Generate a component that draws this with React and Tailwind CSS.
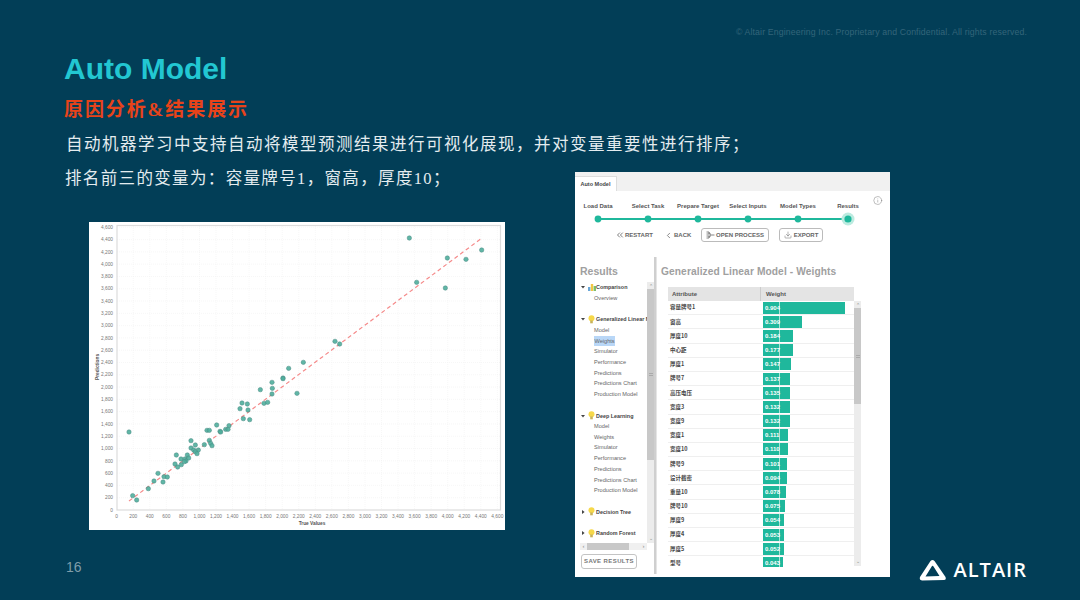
import React from 'react'
import { ChevronsLeft, ChevronLeft, Download, Info } from 'lucide-react'

const sans = { fontFamily: '"Liberation Sans", Arial, sans-serif' }
const body = { fontFamily: '"Liberation Serif", "Noto Sans CJK SC", serif' }

// scatter points measured off the chart, upper part and lower part
const upper = [
  [973, 60], [1087, 120], [1143, 124], [1190, 96], [995, 193], [1081, 210],
  [750, 370], [764, 378], [655, 433], [611, 451], [594, 480],
]
const lower = [
  [561, 22], [594, 11], [526, 44], [562, 40], [636, 55], [561, 57], [471, 84], [487, 87],
  [465, 101], [489, 105], [537, 85], [548, 82], [475, 131], [494, 134], [395, 150], [432, 152],
  [366, 166], [373, 166], [405, 169], [407, 171], [422, 163], [429, 163], [132, 171], [318, 197],
  [373, 196], [377, 205], [381, 212], [358, 209], [331, 210], [318, 219], [326, 225], [340, 225],
  [331, 230], [336, 236], [274, 240], [307, 240], [288, 252], [300, 252], [311, 249], [303, 258],
  [298, 260], [270, 267], [278, 276], [289, 269], [219, 295], [237, 305], [247, 306], [207, 318],
  [234, 321], [190, 341], [143, 362], [155, 375],
]
const points = [
  ...upper.map(([x, y]) => [x / 3 - 4, y / 3 - 4]),
  ...lower.map(([x, y]) => [x / 3 - 4, y / 3 + 153]),
]

const xTicks = Array.from({ length: 24 }, (_, i) => i * 200)
const yTicks = Array.from({ length: 24 }, (_, i) => i * 200)
const px = (v) => 27.7 + v * 0.08275
const py = (v) => 288 - v * 0.06146
const fmt = (v) => v.toLocaleString('en-US')

function Chart() {
  return (
    <div className="w-[416px] h-[308px] ml-[25px] mt-[31px] bg-white">
      <svg viewBox="0 0 416 308" className="w-[416px] h-[308px] block" style={sans}>
        {xTicks.map((t) => (
          <g key={t}>
            {t > 0 && <line x1={px(t)} x2={px(t)} y1="4" y2="288" stroke="#f1f1f1" strokeWidth="0.6" strokeDasharray="1 1" />}
            <text x={px(t)} y="295.5" fontSize="4.8" fill="#777" textAnchor="middle">{fmt(t)}</text>
          </g>
        ))}
        {yTicks.map((t) => (
          <g key={t}>
            {t > 0 && <line x1="28" x2="411" y1={py(t)} y2={py(t)} stroke="#f1f1f1" strokeWidth="0.6" strokeDasharray="1 1" />}
            <text x="24" y={py(t) + 1.7} fontSize="4.8" fill="#777" textAnchor="end">{fmt(t)}</text>
          </g>
        ))}
        <rect x="28" y="3.5" width="383.5" height="284.5" fill="none" stroke="#dcdcdc" strokeWidth="1.2" />
        <line x1="40" y1="279" x2="392" y2="16.7" stroke="#f58a8a" strokeWidth="1.2" strokeDasharray="4 3" />
        {points.map(([x, y], i) => (
          <circle key={i} cx={x} cy={y} r="2.2" fill="#4fae9c" stroke="#4d8a84" strokeWidth="0.5" fillOpacity="0.9" />
        ))}
        <text x="223" y="302.5" fontSize="4.8" fontWeight="700" fill="#555" textAnchor="middle">True Values</text>
        <text transform="translate(9.5 145) rotate(-90)" fontSize="4.8" fontWeight="700" fill="#555" textAnchor="middle">Predictions</text>
      </svg>
    </div>
  )
}

function Stepper() {
  const steps = ['Load Data', 'Select Task', 'Prepare Target', 'Select Inputs', 'Model Types', 'Results']
  return (
    <div className="ml-[-2px]">
      <div className="grid grid-cols-6 w-[300px] mt-[11px]">
        {steps.map((s) => (
          <div key={s} className="text-center text-[6px] leading-[8px] font-bold text-[#555] whitespace-nowrap">{s}</div>
        ))}
      </div>
      <svg width="300" height="16" className="block mt-[1px]">
        <line x1="25" x2="275" y1="8" y2="8" stroke="#1fb89c" strokeWidth="2" />
        {[25, 75, 125, 175, 225].map((x) => (
          <circle key={x} cx={x} cy="8" r="3.4" fill="#1fb89c" />
        ))}
        <circle cx="275" cy="8" r="6.5" fill="#bcebe0" />
        <circle cx="275" cy="8" r="3.6" fill="#1fb89c" />
      </svg>
    </div>
  )
}

function ProcessIcon() {
  return (
    <svg width="9" height="8" viewBox="0 0 9 8" fill="none" stroke="#666" strokeWidth="0.8">
      <path d="M0.5 1H3V3H0.5M0.5 5H3V7H0.5M3 2H4V6H3M4 4H8.5" />
    </svg>
  )
}

function Toolbar() {
  return (
    <div className="flex items-center mt-[1px] h-[14px] text-[6px] font-bold text-[#666]">
      <div className="flex items-center ml-[40px] w-[49px]">
        <ChevronsLeft size={10} strokeWidth={2} />
        RESTART
      </div>
      <div className="flex items-center gap-[1px] w-[37px]">
        <ChevronLeft size={9} strokeWidth={2} />
        BACK
      </div>
      <div className="flex items-center justify-center gap-[1px] w-[68px] h-[14px] border border-[#bbb] rounded-[3px]">
        <ProcessIcon />
        OPEN PROCESS
      </div>
      <div className="flex items-center justify-center gap-[2px] w-[44px] h-[14px] ml-[10px] border border-[#bbb] rounded-[3px]">
        <Download size={8} strokeWidth={1.5} />
        EXPORT
      </div>
    </div>
  )
}

function Bulb() {
  return (
    <svg width="7" height="9" viewBox="0 0 7 9" className="shrink-0">
      <circle cx="3.5" cy="3.2" r="3" fill="#f6d84a" />
      <rect x="2.2" y="5.5" width="2.6" height="2.8" fill="#c9b35a" />
    </svg>
  )
}

function BarsIcon() {
  return (
    <svg width="8" height="8" viewBox="0 0 8 8" className="shrink-0">
      <rect x="0" y="4" width="2.4" height="4" fill="#6aa7d8" />
      <rect x="2.8" y="1" width="2.4" height="7" fill="#f2c744" />
      <rect x="5.6" y="3" width="2.4" height="5" fill="#7cbf6b" />
    </svg>
  )
}

function Arrow({ open }) {
  return (
    <svg width="4" height="4" viewBox="0 0 4 4" className="shrink-0">
      <path d={open ? 'M0 1H4L2 3.6Z' : 'M1 0V4L3.6 2Z'} fill="#444" />
    </svg>
  )
}

const children = ['Model', 'Weights', 'Simulator', 'Performance', 'Predictions', 'Predictions Chart', 'Production Model']

function TreeHead({ label, open, bars }) {
  return (
    <div className="flex items-center h-[10.7px] text-[5.4px] font-bold text-[#444] whitespace-nowrap pl-[1px]">
      <Arrow open={open} />
      <span className="w-[3px] shrink-0" />
      {bars ? <BarsIcon /> : <Bulb />}
      <span className={bars ? '' : 'ml-[1px]'}>{label}</span>
    </div>
  )
}

function TreeLeaf({ label, selected }) {
  return (
    <div className="h-[10.7px] flex items-center pl-[14px] text-[5.6px] text-[#666] whitespace-nowrap">
      <span className={selected ? 'bg-[#b9d7f7] px-[0.5px] leading-[10px]' : ''}>{label}</span>
    </div>
  )
}

function Scrollbar({ height, thumb }) {
  return (
    <div className="w-[7px] bg-[#ececec] flex flex-col justify-between shrink-0" style={{ height }}>
      <div>
        <div className="h-[7px] text-[5px] leading-[8px] text-center text-[#888]">⌃</div>
        <div className="bg-[#c8c8c8] flex items-center justify-center" style={{ height: thumb }}>
          <div className="w-[4px] h-[3px] border-y border-[#aaa]" />
        </div>
      </div>
      <div className="h-[7px] text-[5px] leading-[5px] text-center text-[#888]">⌄</div>
    </div>
  )
}

function Tree() {
  return (
    <div className="flex ml-[5px] mt-[4px] h-[261px]">
      <div className="w-[67px] overflow-hidden">
        <TreeHead label="Comparison" open bars />
        <TreeLeaf label="Overview" />
        <div className="h-[10.7px]" />
        <TreeHead label="Generalized Linear Model" open />
        {children.map((c) => <TreeLeaf key={c} label={c} selected={c === 'Weights'} />)}
        <div className="h-[10.7px]" />
        <TreeHead label="Deep Learning" open />
        {children.map((c) => <TreeLeaf key={c} label={c} />)}
        <div className="h-[10.7px]" />
        <TreeHead label="Decision Tree" />
        <div className="h-[10.7px]" />
        <TreeHead label="Random Forest" />
      </div>
      <Scrollbar height={261} thumb={171} />
    </div>
  )
}

const rows = [
  ['容量牌号1', 0.904], ['窗高', 0.309], ['厚度10', 0.184], ['中心距', 0.177], ['厚度1', 0.147],
  ['牌号7', 0.137], ['高压电压', 0.135], ['宽度3', 0.132], ['宽度9', 0.132], ['宽度1', 0.111],
  ['宽度10', 0.11], ['牌号9', 0.101], ['设计截密', 0.094], ['重量10', 0.078], ['牌号10', 0.075],
  ['厚度9', 0.054], ['厚度4', 0.053], ['厚度5', 0.052], ['型号', 0.043],
]

function WeightsTable() {
  return (
    <div className="ml-[7px] mt-[9px] flex items-start">
      <div className="w-[186px]">
        <div className="flex h-[14px] bg-[#e4e4e4] text-[6px] font-bold text-[#555] items-center">
          <div className="w-[93px] pl-[4px] border-r border-[#ccc] leading-[14px]">Attribute</div>
          <div className="pl-[5px]">Weight</div>
        </div>
        <div className="h-[266px] overflow-hidden">
          {rows.map(([name, v]) => (
            <div key={name} className="flex items-center h-[14.2px] border-b border-[#efefef]">
              <div className="w-[95px] pl-[2px] text-[5.5px] font-bold text-[#444] whitespace-nowrap" style={{ fontFamily: '"Noto Sans CJK SC", sans-serif' }}>{name}</div>
              <div className="h-[12px] bg-[#1fb89c] flex text-[6px] font-bold text-white leading-[12px] overflow-hidden" style={{ width: 17 + 72 * v }}>
                <span className="w-[17px] pl-[2px] border-r border-[#a9e3d7] shrink-0">{v.toFixed(3)}</span>
              </div>
            </div>
          ))}
        </div>
      </div>
      <div className="mt-[14px]">
        <Scrollbar height={265} thumb={96} />
      </div>
    </div>
  )
}

function AppPanel() {
  return (
    <div className="w-[315px] h-[405px] mt-[132px] bg-white flex flex-col" style={sans}>
      <div className="h-[19px] bg-[#f1f1f1] flex items-end">
        <div className="w-[42px] h-[15px] bg-white border-r border-t border-[#ddd] text-[5.5px] font-bold text-[#444] text-center leading-[14px]">Auto Model</div>
      </div>
      <div className="flex justify-between">
        <Stepper />
        <Info size={13} strokeWidth={1.2} className="text-[#777] mt-[2.5px] mr-[7.5px]" />
      </div>
      <Toolbar />
      <div className="flex flex-1 mt-[15px] mb-[3px]">
        <div className="w-[81px] border-r-2 border-[#cfcfcf] flex flex-col">
          <div className="pl-[5px] text-[10.5px] leading-[13px] mt-[8px] font-bold text-[#a0a0a0]">Results</div>
          <Tree />
          <div className="flex items-center h-[7px] ml-[5px] w-[67px] bg-[#f0f0f0] text-[6px] leading-[7px] text-[#888]">
            <span className="w-[7px] text-center">‹</span>
            <div className="w-[42px] h-[7px] bg-[#c8c8c8]" />
            <span className="ml-auto w-[7px] text-center">›</span>
          </div>
          <div className="ml-[6px] mt-[4px] w-[56px] h-[15px] border border-[#c4c4c4] rounded-[3px] text-[6px] font-bold tracking-[0.4px] text-[#777] text-center leading-[13px]">SAVE RESULTS</div>
        </div>
        <div className="flex-1 border-l border-[#e5e5e5] pl-[4px]">
          <div className="text-[10.2px] leading-[13px] mt-[8px] font-bold text-[#a0a0a0] tracking-[0.1px] whitespace-nowrap">Generalized Linear Model - Weights</div>
          <WeightsTable />
        </div>
      </div>
    </div>
  )
}

function Logo() {
  return (
    <div className="flex items-center gap-[7px]">
      <svg width="28" height="22" viewBox="0 0 28 22">
        <path
          fillRule="evenodd"
          fill="#fff"
          d="M11.5 2Q13.5 0 15.5 2L26.5 18Q27.5 21 25 21L3 21.5Q0 21 1 18ZM13 7L6.5 17.5L20.5 17L14.5 7.5Q13.8 6.5 13 7Z"
        />
      </svg>
      <span className="text-[20px] leading-[22px] font-semibold text-white tracking-[1px]" style={{ fontFamily: '"Open Sans", sans-serif' }}>ALTAIR</span>
    </div>
  )
}

function App() {
  return (
    <div className="w-[1080px] h-[600px] bg-[#023e57] overflow-hidden flex flex-col" style={sans}>
      <div className="h-[40px] pt-[27px] pr-[53px] text-right text-[8.7px] leading-[10px] text-[#34657a] tracking-[0.15px] whitespace-nowrap">
        © Altair Engineering Inc. Proprietary and Confidential. All rights reserved.
      </div>
      <div className="flex flex-1">
        <div className="w-[575px] pl-[64px]">
          <h1 className="mt-[11px] text-[30px] leading-[36px] font-bold text-[#22c7d2]">Auto Model</h1>
          <div className="mt-[11px] text-[19px] leading-[24px] font-bold text-[#e8431a] tracking-[1.9px]" style={body}>原因分析&结果展示</div>
          <p className="mt-[11px] pl-[2px] text-[16.5px] leading-[24px] text-[#e4ecef] tracking-[1.5px] whitespace-nowrap" style={body}>自动机器学习中支持自动将模型预测结果进行可视化展现，并对变量重要性进行排序；</p>
          <p className="mt-[10px] pl-[1px] text-[16.5px] leading-[24px] text-[#e4ecef] tracking-[1.35px] whitespace-nowrap" style={body}>排名前三的变量为：容量牌号1，窗高，厚度10；</p>
          <Chart />
          <div className="mt-[27px] pl-[2px] text-[14px] leading-[20px] text-[#7f9daa]">16</div>
        </div>
        <AppPanel />
        <div className="flex-1 flex items-end justify-end pr-[53px] pb-[19px]">
          <Logo />
        </div>
      </div>
    </div>
  )
}

export default App
